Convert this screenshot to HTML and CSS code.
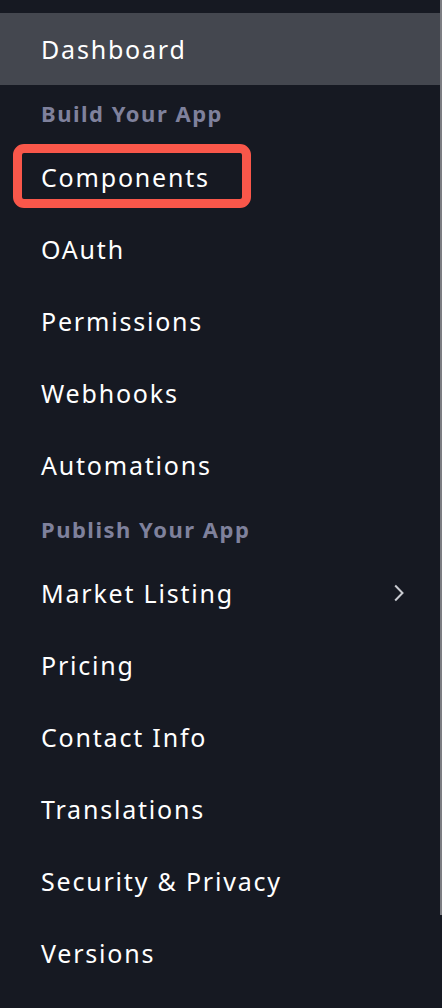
FILE: index.html
```html
<!DOCTYPE html>
<html lang="en">
<head>
<meta charset="utf-8">
<title>Sidebar</title>
<link rel="stylesheet" href="styles.css">
</head>
<body>
<div class="scrollbar"></div>
<nav class="sidebar">
  <a class="item active">Dashboard</a>
  <div class="section">Build Your App</div>
  <a class="item marked">Components<span class="mark"></span></a>
  <a class="item">OAuth</a>
  <a class="item">Permissions</a>
  <a class="item">Webhooks</a>
  <a class="item">Automations</a>
  <div class="section">Publish Your App</div>
  <a class="item has-sub">Market Listing
    <svg class="chev" width="10" height="18" viewBox="0 0 10 18"><path d="M1.2 1.5L8.5 9 1.2 16.5" fill="none" stroke="#c9cbd1" stroke-width="2"/></svg>
  </a>
  <a class="item">Pricing</a>
  <a class="item">Contact Info</a>
  <a class="item">Translations</a>
  <a class="item">Security &amp; Privacy</a>
  <a class="item">Versions</a>
</nav>
</body>
</html>
```
FILE: styles.css
```css
html, body {
  margin: 0;
  padding: 0;
  background: #161922;
  height: 100%;
  overflow: hidden;
}
body {
  padding-top: 13px;
  box-sizing: border-box;
  font-family: "Noto Sans", "Open Sans", sans-serif;
  position: relative;
}
.scrollbar {
  position: absolute;
  top: 0;
  right: 0;
  width: 2px;
  height: 915px;
  background: #7c7d82;
}
.sidebar {
  display: flex;
  flex-direction: column;
  width: 440px;
}
.item {
  position: relative;
  display: flex;
  align-items: center;
  justify-content: space-between;
  height: 72px;
  padding: 0 36px 0 41px;
  color: #ffffff;
  font-size: 25px;
  letter-spacing: 1.8px;
  text-decoration: none;
  box-sizing: border-box;
}
.item.active {
  background: #44474f;
}
.section {
  display: flex;
  align-items: center;
  height: 56px;
  padding-left: 41px;
  color: #7f819c;
  font-size: 22px;
  font-weight: 700;
  letter-spacing: 1.5px;
}
.mark {
  position: absolute;
  left: 13px;
  top: 3px;
  width: 238px;
  height: 64px;
  border: 9px solid #f9574a;
  border-radius: 11px;
  box-sizing: border-box;
}
.chev {
  display: block;
}
```
